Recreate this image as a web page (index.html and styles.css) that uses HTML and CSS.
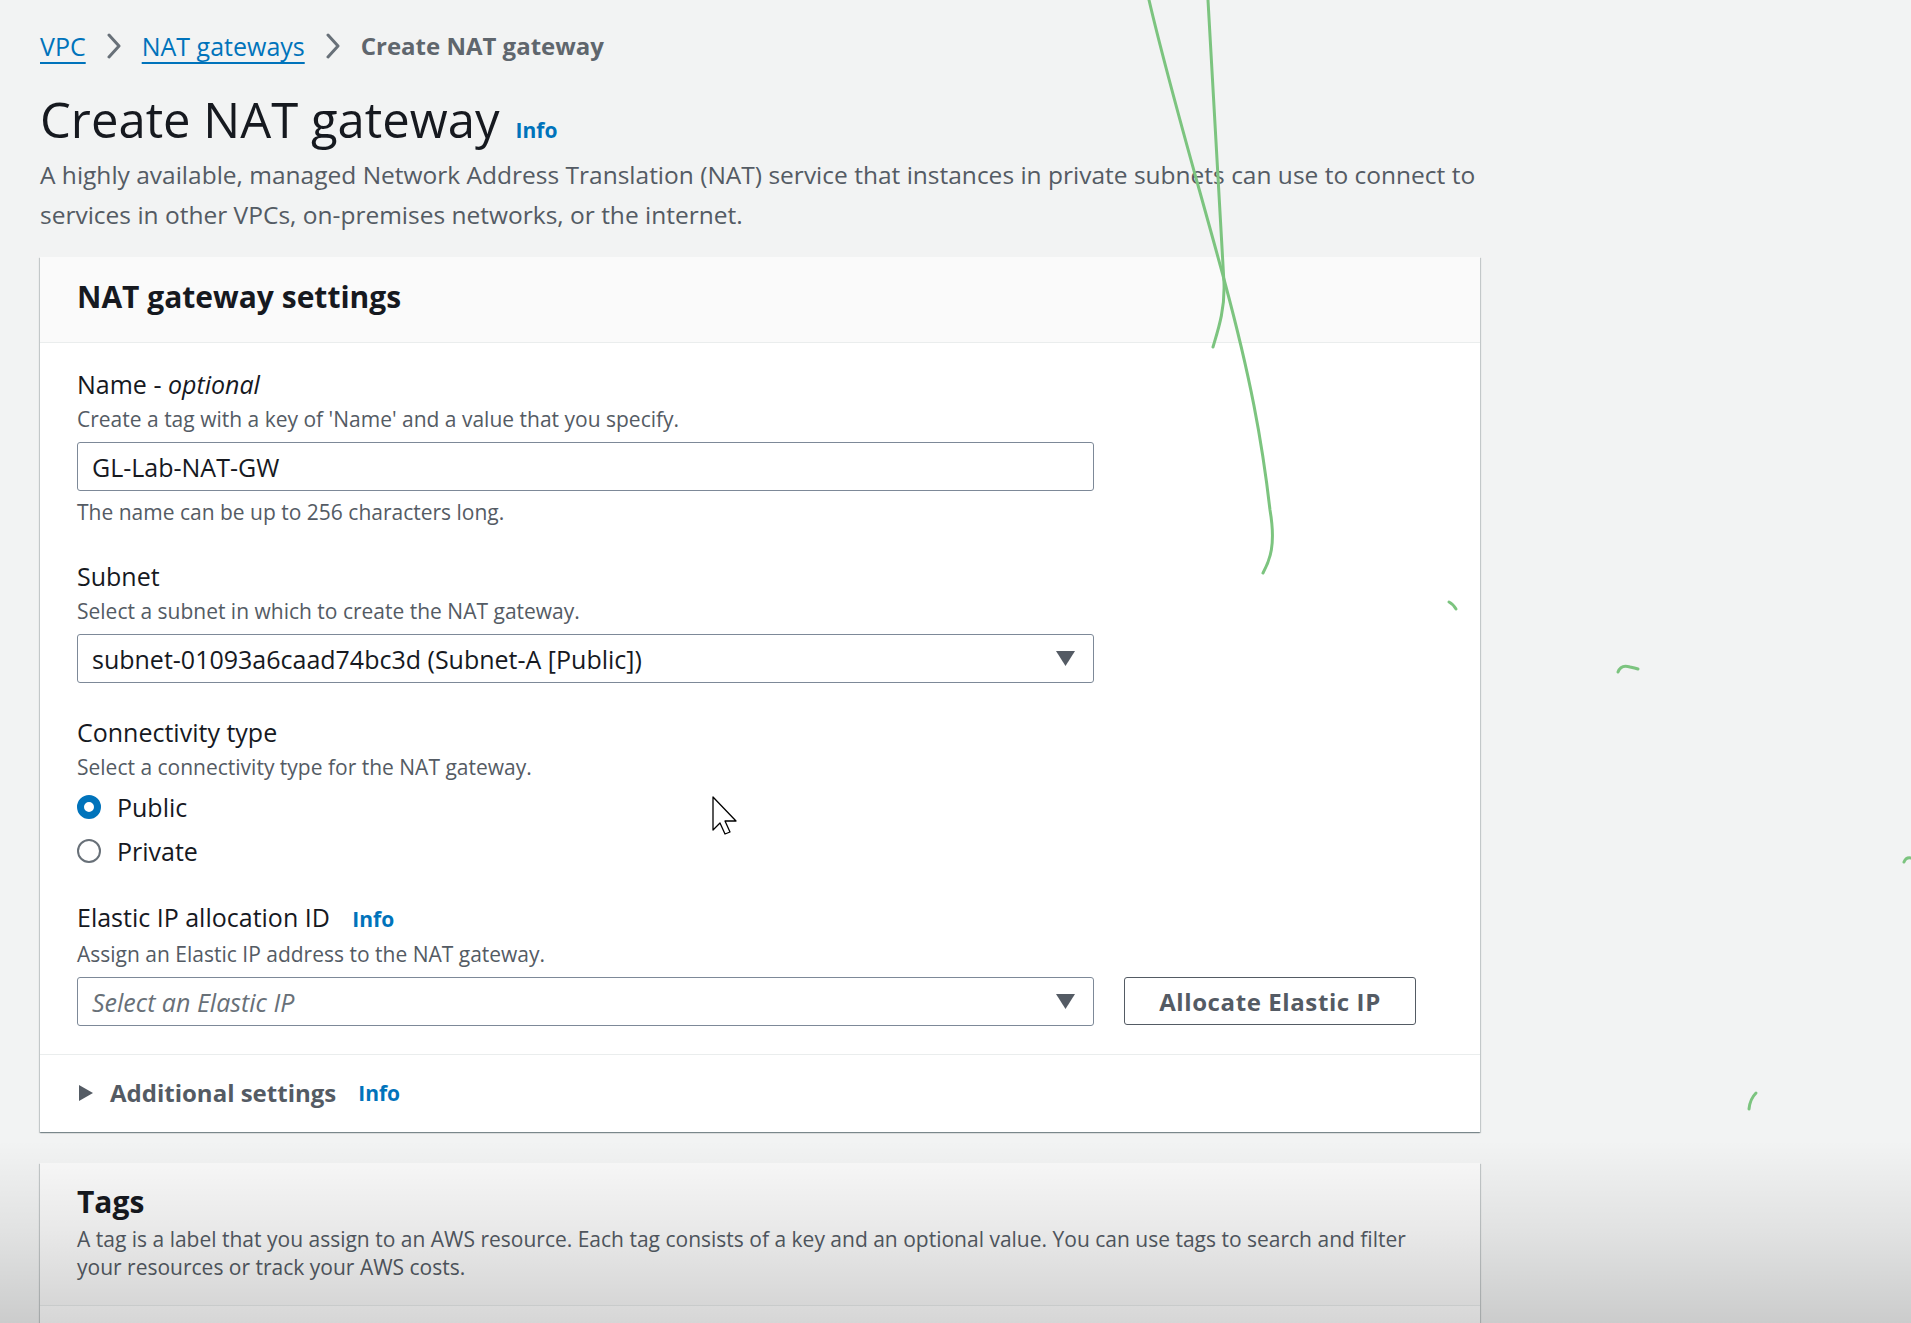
FILE: index.html
```html
<!DOCTYPE html>
<html lang="en">
<head>
<meta charset="utf-8">
<title>Create NAT gateway</title>
<link rel="stylesheet" href="styles.css">
</head>
<body>
<div class="page">
  <nav class="breadcrumbs">
    <a class="crumb-link" href="#">VPC</a>
    <svg class="chev" width="16" height="26" viewBox="0 0 16 26"><path d="M3 2 L13 13 L3 24" /></svg>
    <a class="crumb-link" href="#">NAT gateways</a>
    <svg class="chev" width="16" height="26" viewBox="0 0 16 26"><path d="M3 2 L13 13 L3 24" /></svg>
    <span class="crumb-current">Create NAT gateway</span>
  </nav>

  <header class="page-header">
    <h1 class="title">Create NAT gateway <a class="info title-info" href="#">Info</a></h1>
    <p class="page-desc">A highly available, managed Network Address Translation (NAT) service that instances in private subnets can use to connect to services in other VPCs, on-premises networks, or the internet.</p>
  </header>

  <section class="card">
    <div class="card-header">
      <h2 class="card-title">NAT gateway settings</h2>
    </div>
    <div class="card-body">
      <div class="field">
        <div class="label">Name - <i>optional</i></div>
        <div class="hint">Create a tag with a key of 'Name' and a value that you specify.</div>
        <div class="input control">GL-Lab-NAT-GW</div>
        <div class="constraint">The name can be up to 256 characters long.</div>
      </div>

      <div class="field">
        <div class="label">Subnet</div>
        <div class="hint">Select a subnet in which to create the NAT gateway.</div>
        <div class="input select control">
          <span>subnet-01093a6caad74bc3d (Subnet-A [Public])</span>
          <svg class="caret" width="19" height="15" viewBox="0 0 19 15"><polygon points="0,0 19,0 9.5,15" /></svg>
        </div>
      </div>

      <div class="field">
        <div class="label">Connectivity type</div>
        <div class="hint">Select a connectivity type for the NAT gateway.</div>
        <div class="radios">
          <div class="radio-row"><span class="radio checked"></span><span>Public</span></div>
          <div class="radio-row"><span class="radio"></span><span>Private</span></div>
        </div>
      </div>

      <div class="field">
        <div class="label label-info">Elastic IP allocation ID <a class="info" href="#">Info</a></div>
        <div class="hint">Assign an Elastic IP address to the NAT gateway.</div>
        <div class="eip-row control">
          <div class="input select">
            <span class="placeholder">Select an Elastic IP</span>
            <svg class="caret" width="19" height="15" viewBox="0 0 19 15"><polygon points="0,0 19,0 9.5,15" /></svg>
          </div>
          <button class="btn" type="button">Allocate Elastic IP</button>
        </div>
      </div>
    </div>
    <div class="card-expand">
      <svg class="expand-tri" width="15" height="16" viewBox="0 0 15 16"><polygon points="1,0 15,8 1,16" /></svg>
      <span class="expand-label">Additional settings</span>
      <a class="info expand-info" href="#">Info</a>
    </div>
  </section>

  <section class="card tags-card">
    <div class="card-header tags-header">
      <h2 class="card-title">Tags</h2>
      <p class="tags-desc">A tag is a label that you assign to an AWS resource. Each tag consists of a key and an optional value. You can use tags to search and filter your resources or track your AWS costs.</p>
    </div>
    <div class="tags-body"></div>
  </section>
</div>

<svg class="annotations" width="1911" height="1323" viewBox="0 0 1911 1323">
  <path d="M1149 0 C1170 90 1200 190 1225 283 S1262 440 1270 510 C1276 545 1270 560 1263 573" />
  <path d="M1208 0 C1213 100 1220 200 1224 283 C1225 310 1218 330 1213 347" />
  <path d="M1449 602 q4 2 7 7" />
  <path d="M1618 672 q3 -8 12 -5 q5 1 8 2" />
  <path d="M1904 862 q2 -5 7 -4" />
  <path d="M1749 1109 q1 -10 7 -16" />
</svg>

<svg class="cursor" width="28" height="42" viewBox="0 0 28 42">
  <path d="M1 1 L1 34 L8 27 L13 38 L18 36 L13 25 L24 25 Z" />
</svg>

<div class="video-shade"></div>
</body>
</html>
```

FILE: styles.css
```css
html, body {
  margin: 0;
  padding: 0;
}

body {
  background: #f2f3f3;
  font-family: "Open Sans", "Noto Sans", "Liberation Sans", sans-serif;
  color: #16191f;
  min-height: 1323px;
  overflow: hidden;
  position: relative;
}

.page {
  width: 1440px;
  padding: 30px 0 0 40px;
}

/* Breadcrumbs */
.breadcrumbs {
  display: flex;
  align-items: center;
  height: 32px;
  font-size: 25px;
  line-height: 32px;
}

.crumb-link {
  color: #0073bb;
  text-decoration: underline;
  text-decoration-thickness: 2px;
  text-underline-offset: 6px;
}

.chev {
  margin: 0 20px 0 20px;
}

.chev path {
  fill: none;
  stroke: #687078;
  stroke-width: 3;
  stroke-linecap: round;
  stroke-linejoin: round;
}

.crumb-current {
  color: #5f666d;
  font-weight: 700;
  font-size: 24px;
}

/* Page header */
.title {
  margin: 32px 0 0;
  font-size: 49px;
  line-height: 50px;
  font-weight: 400;
  display: flex;
  align-items: baseline;
  gap: 16px;
}

.info {
  color: #0073bb;
  font-weight: 700;
  text-decoration: none;
  font-size: 21px;
}

.page-desc {
  margin: 0;
  font-size: 24.5px;
  line-height: 40px;
  color: #545b64;
}

/* Cards */
.card {
  margin-top: 22px;
  background: #ffffff;
  box-shadow: 0 1px 1px 0 rgba(0, 28, 36, 0.3), 1px 1px 1px 0 rgba(0, 28, 36, 0.15), -1px 1px 1px 0 rgba(0, 28, 36, 0.15);
}

.card-header {
  background: #fafafa;
  border-bottom: 1px solid #eaeded;
  padding: 22px 37px 27px;
}

.card-title {
  margin: 0;
  font-size: 30px;
  line-height: 36px;
  font-weight: 700;
}

.card-body {
  padding: 24px 37px 28px;
  display: flex;
  flex-direction: column;
  gap: 32px;
}

.label {
  font-size: 25px;
  line-height: 34px;
}

.label i {
  font-style: italic;
}

.label-info .info {
  margin-left: 16px;
}

.hint,
.constraint {
  font-size: 21px;
  line-height: 30px;
  color: #545b64;
}

.hint {
  margin-top: 3px;
}

.control {
  margin-top: 8px;
}

.constraint {
  margin-top: 6px;
}

.input {
  box-sizing: border-box;
  width: 1017px;
  height: 49px;
  border: 1px solid #7d8998;
  border-radius: 3px;
  padding: 0 14px;
  font-size: 25px;
  display: flex;
  align-items: center;
  background: #fff;
}

.select {
  justify-content: space-between;
  padding-right: 18px;
}

.caret polygon {
  fill: #545b64;
}

.placeholder {
  color: #687078;
  font-style: italic;
}

.radios {
  margin-top: 8px;
  display: flex;
  flex-direction: column;
  gap: 10px;
}

.radio-row {
  display: flex;
  align-items: center;
  gap: 16px;
  font-size: 25px;
  line-height: 34px;
}

.radio {
  box-sizing: border-box;
  width: 24px;
  height: 24px;
  border-radius: 50%;
  border: 2px solid #687078;
  background: #fff;
}

.radio.checked {
  border: 7px solid #0073bb;
}

.eip-row {
  display: flex;
  gap: 30px;
  align-items: flex-start;
}

.btn {
  box-sizing: border-box;
  width: 292px;
  height: 48px;
  background: #fff;
  border: 1px solid #545b64;
  border-radius: 3px;
  color: #545b64;
  font-family: inherit;
  font-size: 24px;
  font-weight: 700;
  letter-spacing: 0.6px;
  padding: 0;
}

.card-expand {
  border-top: 1px solid #eaeded;
  padding: 21px 37px 22px 38px;
  display: flex;
  align-items: center;
  line-height: 34px;
}

.expand-tri polygon {
  fill: #545b64;
}

.expand-label {
  margin-left: 17px;
  font-size: 24px;
  font-weight: 700;
  color: #545b64;
}

.expand-info {
  margin-left: 22px;
}

/* Tags */
.tags-card {
  margin-top: 31px;
}

.tags-header {
  padding: 21px 37px 24px;
}

.tags-desc {
  margin: 5px 0 0;
  font-size: 21px;
  line-height: 28px;
  color: #545b64;
}

.tags-body {
  height: 120px;
}

/* Overlays: annotation strokes, mouse cursor, video shading */
.annotations {
  position: absolute;
  left: 0;
  top: 0;
  pointer-events: none;
}

.annotations path {
  fill: none;
  stroke: #7cc47f;
  stroke-width: 3;
  stroke-linecap: round;
}

.cursor {
  position: absolute;
  left: 712px;
  top: 796px;
  pointer-events: none;
}

.cursor path {
  fill: #ffffff;
  stroke: #000000;
  stroke-width: 1.3;
  stroke-linejoin: round;
}

.video-shade {
  position: absolute;
  left: 0;
  right: 0;
  top: 1140px;
  height: 183px;
  pointer-events: none;
  background: linear-gradient(to bottom, rgba(0, 0, 0, 0) 0%, rgba(0, 0, 0, 0.07) 50%, rgba(0, 0, 0, 0.16) 100%);
}
```
